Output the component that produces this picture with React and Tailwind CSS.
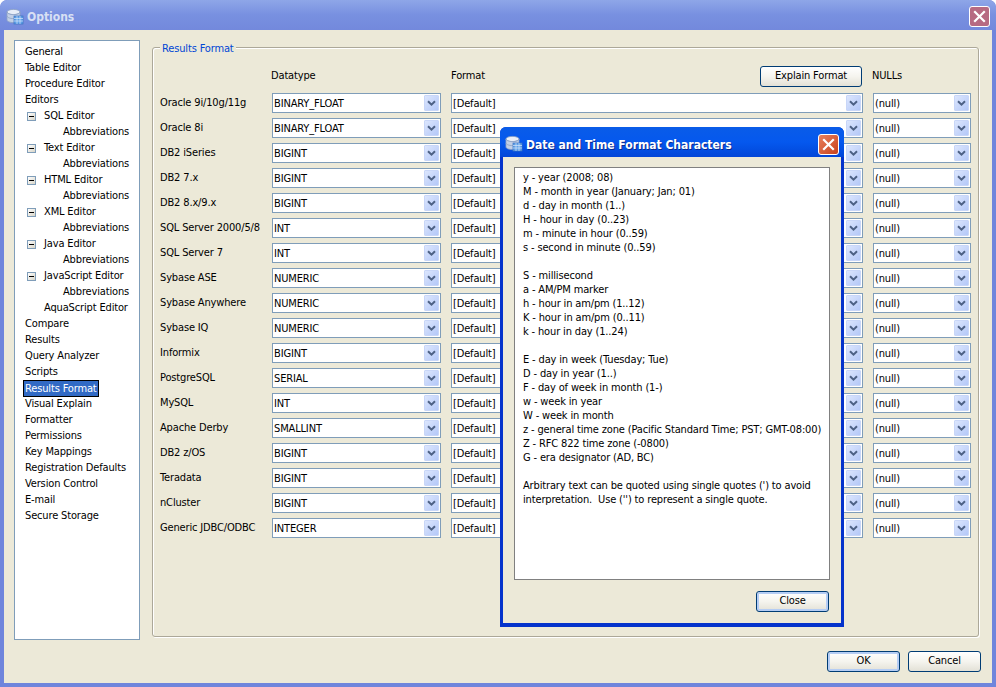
const tree = [
  ["General", 0], ["Table Editor", 0], ["Procedure Editor", 0], ["Editors", 0],
  ["SQL Editor", 1], ["Abbreviations", 2], ["Text Editor", 1], ["Abbreviations", 2],
  ["HTML Editor", 1], ["Abbreviations", 2], ["XML Editor", 1], ["Abbreviations", 2],
  ["Java Editor", 1], ["Abbreviations", 2], ["JavaScript Editor", 1], ["Abbreviations", 2],
  ["AquaScript Editor", 3], ["Compare", 0], ["Results", 0], ["Query Analyzer", 0], ["Scripts", 0],
  ["Results Format", 4], ["Visual Explain", 0], ["Formatter", 0], ["Permissions", 0],
  ["Key Mappings", 0], ["Registration Defaults", 0], ["Version Control", 0], ["E-mail", 0], ["Secure Storage", 0],
];

const rows = [
  ["Oracle 9i/10g/11g", "BINARY_FLOAT"], ["Oracle 8i", "BINARY_FLOAT"], ["DB2 iSeries", "BIGINT"],
  ["DB2 7.x", "BIGINT"], ["DB2 8.x/9.x", "BIGINT"], ["SQL Server 2000/5/8", "INT"], ["SQL Server 7", "INT"],
  ["Sybase ASE", "NUMERIC"], ["Sybase Anywhere", "NUMERIC"], ["Sybase IQ", "NUMERIC"], ["Informix", "BIGINT"],
  ["PostgreSQL", "SERIAL"], ["MySQL", "INT"], ["Apache Derby", "SMALLINT"], ["DB2 z/OS", "BIGINT"],
  ["Teradata", "BIGINT"], ["nCluster", "BIGINT"], ["Generic JDBC/ODBC", "INTEGER"],
];

const help = [
  "y - year (2008; 08)", "M - month in year (January; Jan; 01)", "d - day in month (1..)", "H - hour in day (0..23)",
  "m - minute in hour (0..59)", "s - second in minute (0..59)", "", "S - millisecond", "a - AM/PM marker",
  "h - hour in am/pm (1..12)", "K - hour in am/pm (0..11)", "k - hour in day (1..24)", "", "E - day in week (Tuesday; Tue)",
  "D - day in year (1..)", "F - day of week in month (1-)", "w - week in year", "W - week in month",
  "z - general time zone (Pacific Standard Time; PST; GMT-08:00)", "Z - RFC 822 time zone (-0800)", "G - era designator (AD, BC)", "",
  "Arbitrary text can be quoted using single quotes (') to avoid", "interpretation.  Use ('') to represent a single quote.",
];

function AppIcon() {
  return (
    <svg width="18" height="18" viewBox="0 0 18 18" className="shrink-0">
      <ellipse cx="7.5" cy="4" rx="6.5" ry="2.6" fill="#e8eef8" stroke="#8da2c4" strokeWidth="0.8" />
      <path d="M1 4v8c0 1.4 3 2.6 6.5 2.6S14 13.4 14 12V4c0 1.4-3 2.6-6.5 2.6S1 5.4 1 4z" fill="#c3d0e6" stroke="#8da2c4" strokeWidth="0.8" />
      <path d="M1 8c0 1.4 3 2.6 6.5 2.6S14 9.4 14 8" fill="none" stroke="#8da2c4" strokeWidth="0.8" />
      <rect x="8" y="8" width="9" height="8" fill="#5fa0e8" stroke="#3b73c0" strokeWidth="0.7" />
      <path d="M8 10.5h9M8 13h9M11 8v8M14 8v8" stroke="#d8e8fa" strokeWidth="0.7" />
    </svg>
  );
}

function CloseX({ className }) {
  return (
    <div className={`flex items-center justify-center w-[21px] h-[21px] rounded-[3px] border border-white ${className}`}>
      <svg width="13" height="13" viewBox="0 0 13 13">
        <path d="M2 2l9 9M11 2l-9 9" stroke="#fff" strokeWidth="2.2" strokeLinecap="square" />
      </svg>
    </div>
  );
}

function Combo({ value }) {
  return (
    <div className="flex items-center h-[20px] bg-white border border-[#7f9db9] pl-px pr-px">
      <span className="flex-1 truncate pt-px leading-[17px]">{value}</span>
      <div className="flex items-center justify-center w-[15px] h-[16px] rounded-[1px] bg-gradient-to-br from-[#dce6fd] to-[#b4c8f8] border border-[#c8d6f8]">
        <svg width="9" height="7" viewBox="0 0 9 7">
          <path d="M1 1.2l3.5 3.5L8 1.2" fill="none" stroke="#4d6185" strokeWidth="2" />
        </svg>
      </div>
    </div>
  );
}

function Btn({ children, className, focus }) {
  return (
    <div className={`flex items-center justify-center h-[21px] rounded-[3px] border border-[#003c74] bg-gradient-to-b from-white via-[#f5f4ee] to-[#e3e1d6] ${focus ? "shadow-[inset_0_0_0_2px_#b5cdf4]" : ""} ${className}`}>
      {children}
    </div>
  );
}

function TreeRow({ label, kind }) {
  const text = <span className={kind === 4 ? "bg-[#316ac5] text-white outline-1 outline-black px-px leading-[15px]" : "px-px"}>{label}</span>;
  const indent = { 0: "pl-[9px]", 1: "pl-[12px]", 2: "pl-[47px]", 3: "pl-[28px]", 4: "pl-[9px]" }[kind];
  return (
    <div className={`flex items-center h-[16px] whitespace-nowrap ${indent}`}>
      {kind === 1 && (
        <div className="flex items-center justify-center w-[9px] h-[9px] mr-[7px] border border-[#7f9db9] bg-gradient-to-br from-white to-[#d8d5c8]">
          <div className="w-[5px] h-px bg-black" />
        </div>
      )}
      {text}
    </div>
  );
}

export default function App() {
  return (
    <div className="relative w-[996px] h-[687px] overflow-hidden flex flex-col bg-[#6f85dc] rounded-t-[7px] text-[11px] tracking-[-0.15px] text-black font-['DejaVu_Sans_Condensed','DejaVu_Sans',sans-serif]">
      <div className="flex items-center h-[30px] pt-[3px] pl-[6px] pr-[4px] shrink-0 rounded-t-[7px] bg-gradient-to-b from-[#8ea6e8] via-[#7890e0] to-[#7389dc]">
        <AppIcon />
        <span className="ml-[3px] flex-1 text-[12px] tracking-normal font-bold text-[#d8e0f4]">Options</span>
        <CloseX className="bg-[#b76a82] mr-[2px]" />
      </div>
      <div className="flex-1 flex flex-col mx-[4px] mb-[4px] bg-[#ece9d8] min-h-0">
        <div className="flex-1 flex pt-[10px] pl-[10px] pr-[13px] gap-[12px] min-h-0">
          <div className="w-[126px] h-[600px] bg-white border border-[#7f9db9] pt-[3px] shrink-0">
            {tree.map(([l, k], i) => <TreeRow key={i} label={l} kind={k} />)}
          </div>
          <div className="relative flex-1 mt-[7px] h-[590px] border border-[#aca899] rounded-[3px] shadow-[inset_1px_1px_0_#fff,1px_1px_0_#fff] pl-[7px] pr-[7px] pt-[17px]">
            <span className="absolute left-[7px] -top-[6px] bg-[#ece9d8] px-[2px] text-[#0046d5] leading-[13px]">Results Format</span>
            <div className="grid grid-cols-[102px_169px_412px_98px] gap-x-[10px] gap-y-[5px]">
              <div className="h-[23px]" />
              <div className="h-[23px] flex items-center -ml-px">Datatype</div>
              <div className="h-[23px] flex items-center justify-between">
                <span>Format</span>
                <Btn className="w-[102px] mr-px">Explain Format</Btn>
              </div>
              <div className="h-[23px] flex items-center -ml-px">NULLs</div>
              {rows.map(([name, type]) => (
                <div key={name} className="contents">
                  <div className="h-[20px] pt-px flex items-center whitespace-nowrap">{name}</div>
                  <Combo value={type} />
                  <Combo value="[Default]" />
                  <Combo value="(null)" />
                </div>
              ))}
            </div>
          </div>
        </div>
        <div className="h-[39px] shrink-0 flex justify-end items-start gap-[8px] pr-[11px] pt-[7px]">
          <Btn className="w-[73px]" focus>OK</Btn>
          <Btn className="w-[73px]">Cancel</Btn>
        </div>
      </div>

      <div className="absolute left-[500px] top-[127px] w-[344px] h-[500px] flex flex-col bg-[#0433cc] rounded-t-[6px]">
        <div className="flex items-center h-[30px] pt-[4px] pl-[5px] pr-[5px] shrink-0 rounded-t-[6px] bg-gradient-to-b from-[#0a5ce8] via-[#0558ee] to-[#0246d8]">
          <AppIcon />
          <span className="ml-[3px] pt-px flex-1 text-[12px] tracking-normal font-bold text-white [text-shadow:1px_1px_0_#0a2a90]">Date and Time Format Characters</span>
          <CloseX className="bg-gradient-to-br from-[#e8805c] to-[#c8401a]" />
        </div>
        <div className="flex-1 flex flex-col mx-[3px] mb-[4px] bg-[#ece9d8] px-[11px] pt-[10px] min-h-0">
          <div className="h-[413px] shrink-0 bg-white border border-[#808080] pl-[8px] pt-[3px] leading-[14px]">
            {help.map((l, i) => <div key={i} className="h-[14px] whitespace-pre">{l}</div>)}
          </div>
          <div className="flex justify-end pt-[11px] pr-px">
            <Btn className="w-[73px]" focus>Close</Btn>
          </div>
        </div>
      </div>
    </div>
  );
}
